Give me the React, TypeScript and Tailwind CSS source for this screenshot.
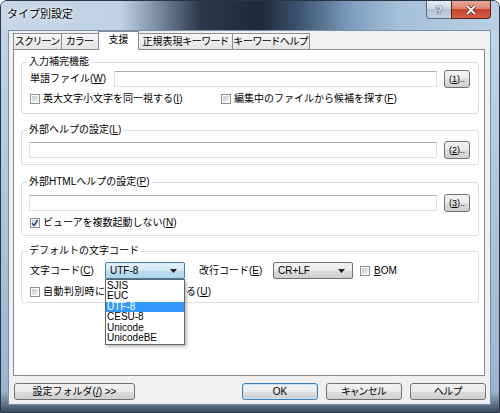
import type { ReactNode } from "react"

function Check({ checked }: { checked?: boolean }) {
  return (
    <span className="relative flex h-[10px] w-[10px] shrink-0 items-center justify-center border border-[#8e8f8f] bg-white">
      <span className="h-[6px] w-[6px] bg-[linear-gradient(135deg,#c6c7c8,#f4f4f4)]" />
      {checked && (
        <svg className="absolute left-0 top-0" width="8" height="8" viewBox="0 0 8 8">
          <path d="M1 4.2 L3 6.5 L7 1" fill="none" stroke="#2b4d8c" strokeWidth="1.5" />
        </svg>
      )}
    </span>
  )
}

function Input({ className }: { className: string }) {
  return <div className={`h-[16px] rounded-[1px] border border-[#dbdfe6] border-t-[#abadb3] bg-white ${className}`} />
}

function SmallBtn({ n }: { n: string }) {
  return (
    <div className="ml-[7px] flex h-[18px] w-[26px] items-center justify-center rounded-[3px] border border-[#707070] bg-[linear-gradient(#f2f2f2_0%,#ebebeb_50%,#dddddd_50%,#cfcfcf_100%)] text-[9px] leading-[10px]">
      (<u>{n}</u>)..
    </div>
  )
}

function Group({ title, className, children }: { title: ReactNode; className: string; children: ReactNode }) {
  return (
    <div className={`relative ml-[7px] w-[458px] rounded-[3px] border border-[#d5dfe5] ${className}`}>
      <span className="absolute left-[5px] top-[-7px] bg-white px-[2px] text-[10px] leading-[12px]">{title}</span>
      {children}
    </div>
  )
}

function Combo({ value, focused, children }: { value: string; focused?: boolean; children?: ReactNode }) {
  return (
    <div className="relative w-[80px]">
      <div
        className={
          focused
            ? "flex h-[17px] items-center justify-between rounded-[2px] border border-[#3c7fb1] bg-[linear-gradient(#e4f1f9_0%,#d3e8f5_50%,#bfdcef_50%,#b2d4ea_100%)] pl-[4px] pr-[7px]"
            : "flex h-[17px] items-center justify-between rounded-[2px] border border-[#707070] bg-[linear-gradient(#f2f2f2_0%,#ebebeb_50%,#dddddd_50%,#cfcfcf_100%)] pl-[4px] pr-[7px]"
        }
      >
        <span className="text-[10px] leading-[12px]">{value}</span>
        <svg width="7" height="4" viewBox="0 0 7 4">
          <path d="M0 0 H7 L3.5 4 Z" fill="#1b1b1b" />
        </svg>
      </div>
      {children}
    </div>
  )
}

function Btn({ className, children }: { className: string; children: ReactNode }) {
  return (
    <div
      className={`flex h-[17px] items-center justify-center rounded-[3px] border bg-[linear-gradient(#f2f2f2_0%,#ebebeb_50%,#dddddd_50%,#cfcfcf_100%)] text-[10px] leading-[12px] ${className}`}
    >
      {children}
    </div>
  )
}

const items = ["SJIS", "EUC", "UTF-8", "CESU-8", "Unicode", "UnicodeBE"]

export default function App() {
  return (
    <div className="flex h-[413px] w-[500px] flex-col overflow-hidden rounded-t-[7px] border border-[#2b3644] bg-[linear-gradient(180deg,#c4d6e9_0%,#aec5dd_50%,#9bb5d1_95%,#3a4a5e_100%)] text-black [font-family:'Liberation_Sans','Noto_Sans_CJK_JP',sans-serif]">
      {/* title bar */}
      <div className="flex h-[29px] shrink-0 items-start justify-between bg-[linear-gradient(90deg,#c6d7e9_0%,#bfd1e4_24%,#7d90a6_31%,#2b394b_40%,#1e2939_52%,#3c5470_60%,#7d9cbd_70%,#a6c0da_80%,#b9cfe5_100%)]">
        <span className="pl-[6px] pt-[6px] text-[11px] leading-[14px] [text-shadow:0_0_6px_#fff,0_0_3px_#fff]">
          タイプ別設定
        </span>
        <div className="mr-[8px] flex">
          <div className="flex h-[18px] w-[25px] items-center justify-center rounded-bl-[4px] border border-r-0 border-t-0 border-[#56667c] bg-[linear-gradient(#e4edf6_0%,#cbd7e4_45%,#b1c2d5_50%,#c4d4e4_100%)] text-[11px] font-bold leading-[12px] text-white [text-shadow:0_0_1px_#334,0_0_1px_#334,0_0_1px_#334]">
            ?
          </div>
          <div className="flex h-[18px] w-[40px] items-center justify-center rounded-br-[4px] border border-t-0 border-[#4c2520] bg-[linear-gradient(#eaa898_0%,#de8470_45%,#c6432c_50%,#d45d44_100%)]">
            <svg width="12" height="10" viewBox="0 0 12 10">
              <path d="M2 1 L10 9 M10 1 L2 9" stroke="#5a1e16" strokeWidth="3.4" />
              <path d="M2 1 L10 9 M10 1 L2 9" stroke="#fff" strokeWidth="2" />
            </svg>
          </div>
        </div>
      </div>

      {/* client area */}
      <div className="ml-[7px] mr-[8px] flex h-[375px] shrink-0 flex-col border border-[#7b8fa6] bg-[#f0f0f0]">
        {/* tabs */}
        <div className="ml-[4px] flex h-[18px] items-end text-[10px] leading-[12px] [font-feature-settings:'palt']">
          <div className="flex h-[16px] w-[49px] items-center justify-center border border-b-0 border-[#898c95] bg-[linear-gradient(#f7f7f7,#e4e4e4)]">
            スクリーン
          </div>
          <div className="ml-[-1px] flex h-[16px] w-[38px] items-center justify-center border border-b-0 border-[#898c95] bg-[linear-gradient(#f7f7f7,#e4e4e4)]">
            カラー
          </div>
          <div className="relative z-10 mb-[-1px] ml-[-1px] flex h-[19px] w-[41px] items-start justify-center border border-b-0 border-[#898c95] bg-white pt-[2px]">
            支援
          </div>
          <div className="ml-[-1px] flex h-[16px] w-[95px] items-center justify-center border border-b-0 border-[#898c95] bg-[linear-gradient(#f7f7f7,#e4e4e4)]">
            正規表現キーワード
          </div>
          <div className="ml-[-1px] flex h-[16px] w-[78px] items-center justify-center border border-b-0 border-[#898c95] bg-[linear-gradient(#f7f7f7,#e4e4e4)]">
            キーワードヘルプ
          </div>
        </div>

        {/* panel */}
        <div className="ml-[4px] flex h-[327px] w-[472px] flex-col border border-[#898c95] bg-white text-[10px] leading-[12px]">
          <Group title="入力補完機能" className="mt-[12px] h-[52px] pt-[6px]">
            <div className="flex h-[19px] items-center pl-[8px]">
              <span className="w-[84px]">
                単語ファイル(<u>W</u>)
              </span>
              <Input className="w-[323px]" />
              <SmallBtn n="1" />
            </div>
            <div className="mt-[5px] flex h-[12px] items-center pl-[8px]">
              <Check />
              <span className="ml-[3px] w-[178px]">
                英大文字小文字を同一視する(<u>I</u>)
              </span>
              <Check />
              <span className="ml-[3px]">
                編集中のファイルから候補を探す(<u>F</u>)
              </span>
            </div>
          </Group>

          <Group
            title={
              <>
                外部ヘルプの設定(<u>L</u>)
              </>
            }
            className="mt-[16px] h-[35px] pt-[10px]"
          >
            <div className="flex h-[17px] items-center pl-[7px]">
              <Input className="w-[408px]" />
              <SmallBtn n="2" />
            </div>
          </Group>

          <Group
            title={
              <>
                外部HTMLヘルプの設定(<u>P</u>)
              </>
            }
            className="mt-[17px] h-[54px] pt-[11px]"
          >
            <div className="flex h-[17px] items-center pl-[7px]">
              <Input className="w-[408px]" />
              <SmallBtn n="3" />
            </div>
            <div className="mt-[6px] flex h-[12px] items-center pl-[8px]">
              <Check checked />
              <span className="ml-[3px]">
                ビューアを複数起動しない(<u>N</u>)
              </span>
            </div>
          </Group>

          <Group title="デフォルトの文字コード" className="z-10 mt-[15px] h-[52px] pt-[10px]">
            <div className="flex h-[17px] items-center pl-[8px]">
              <span className="w-[75px]">
                文字コード(<u>C</u>)
              </span>
              <Combo value="UTF-8" focused>
                <div className="absolute left-0 top-full z-20 w-[80px] border border-[#646464] bg-white py-[0.5px] shadow-[2px_2px_3px_rgba(0,0,0,0.25)]">
                  {items.map((it) => (
                    <div
                      key={it}
                      className={
                        it === "UTF-8"
                          ? "h-[10.5px] bg-[#3399ff] pl-[1px] leading-[10.5px] text-white"
                          : "h-[10.5px] pl-[1px] leading-[10.5px]"
                      }
                    >
                      {it}
                    </div>
                  ))}
                </div>
              </Combo>
              <span className="ml-[14px] w-[74px]">
                改行コード(<u>E</u>)
              </span>
              <Combo value="CR+LF" />
              <span className="ml-[7px]">
                <Check />
              </span>
              <span className="ml-[4px]">
                <u>B</u>OM
              </span>
            </div>
            <div className="mt-[7px] flex h-[12px] items-center pl-[8px]">
              <Check />
              <span className="ml-[3px] tracking-[0.4px]">
                自動判別時にCESU-8を優先する(<u>U</u>)
              </span>
            </div>
          </Group>
        </div>

        {/* bottom buttons */}
        <div className="ml-[5px] mr-[4px] mt-[7px] flex justify-between">
          <Btn className="w-[121px] border-[#707070]">
            設定フォルダ(<u>/</u>) &gt;&gt;
          </Btn>
          <div className="flex gap-[8px]">
            <Btn className="w-[76px] border-[#3c7fb1] shadow-[inset_0_0_0_1px_#bfe6fb]">OK</Btn>
            <Btn className="w-[76px] border-[#707070] [font-feature-settings:'palt']">キャンセル</Btn>
            <Btn className="w-[76px] border-[#707070] [font-feature-settings:'palt']">ヘルプ</Btn>
          </div>
        </div>
      </div>
    </div>
  )
}
